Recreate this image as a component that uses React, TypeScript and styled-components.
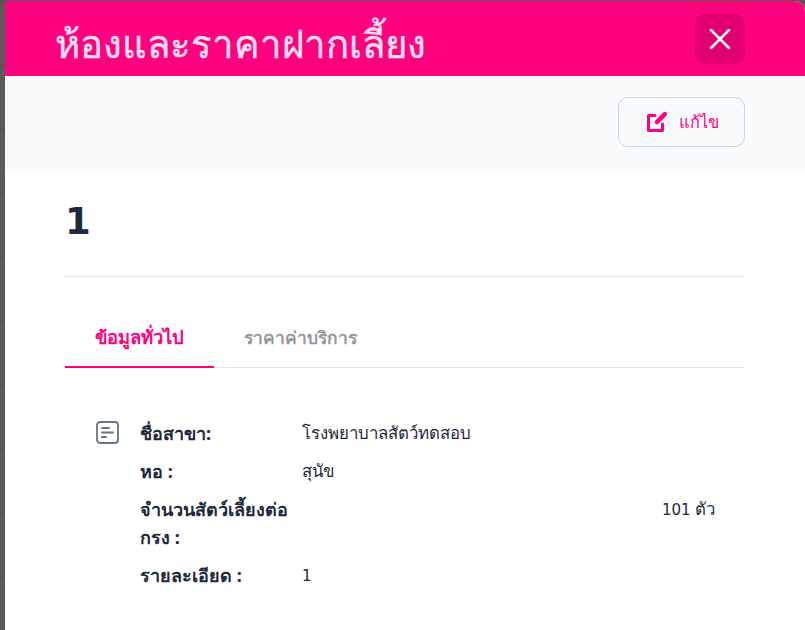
import React from "react";
import styled, { createGlobalStyle } from "styled-components";
import { X } from "lucide-react";

const GlobalStyle = createGlobalStyle`
  html, body {
    margin: 0;
    padding: 0;
    width: 805px;
    height: 630px;
    overflow: hidden;
    background: repeating-linear-gradient(
      to bottom,
      #5a5a5a 0,
      #5a5a5a 1px,
      #4e4e4e 1px,
      #4e4e4e 2px,
      #5a5a5a 2px,
      #5a5a5a 64px
    );
  }
  * { box-sizing: border-box; }
`;

const Screen = styled.div`
  width: 805px;
  height: 630px;
  padding: 1px 0 0 5px;
  overflow: hidden;
  font-family: "Noto Sans", sans-serif;
`;

const Panel = styled.div`
  height: 629px;
  background: #ffffff;
  border-top-right-radius: 10px;
  overflow: hidden;
`;

const Header = styled.header`
  display: flex;
  align-items: center;
  justify-content: space-between;
  height: 75px;
  padding: 0 60px 0 50px;
  background: #ff007f;
`;

const Title = styled.h1`
  margin: 12px 0 0;
  font-size: 38.300px;
  font-weight: 500;
  color: #ffdff0;
  -webkit-text-stroke: 0.4px #ffdff0;
`;

const CloseButton = styled.button`
  display: flex;
  align-items: center;
  justify-content: center;
  width: 50px;
  height: 50px;
  padding: 0;
  border: none;
  border-radius: 10px;
  background: #e0006f;
  color: #ffffff;
`;

const ActionBar = styled.div`
  display: flex;
  justify-content: flex-end;
  height: 96px;
  padding: 21px 60px 0 0;
  background: #f9fafc;
`;

const EditButton = styled.button`
  display: flex;
  align-items: center;
  gap: 11px;
  width: 127px;
  height: 50px;
  padding: 0 0 0 27px;
  border: 1px solid #cdd6e6;
  border-radius: 10px;
  background: transparent;
  font-family: "Noto Sans", sans-serif;
  font-size: 16.500px;
  font-weight: 500;
  color: #ff007f;
`;

const Body = styled.div`
  padding: 0 60px;
`;

const Heading = styled.div`
  height: 105px;
  padding-top: 27px;
  border-bottom: 1px solid #e4e6ec;
  font-family: "DejaVu Sans", sans-serif;
  font-size: 37px;
  font-weight: 700;
  line-height: 45px;
  color: #1e293b;
`;

const Tabs = styled.div`
  display: flex;
  height: 91px;
  padding-top: 40px;
  border-bottom: 1px solid #e4e6ec;
`;

const Tab = styled.div<{ $active?: boolean }>`
  height: 51px;
  padding: 0 30px;
  border-bottom: 2px solid ${(p) => (p.$active ? "#ff007f" : "transparent")};
  font-size: ${(p) => (p.$active ? "18.300px" : "17.400px")};
  font-weight: 700;
  line-height: 40px;
  color: ${(p) => (p.$active ? "#ff007f" : "#94979e")};
`;

const Info = styled.div`
  display: flex;
  gap: 20px;
  padding: 51px 30px 0;
`;

const IconBox = styled.svg`
  flex: none;
  width: 25px;
  height: 25px;
  margin-top: 1px;
  color: #64748b;
`;

const Rows = styled.div`
  flex: 1;
  display: flex;
  flex-direction: column;
  gap: 10px;
`;

const Row = styled.div`
  display: grid;
  grid-template-columns: 162px 1fr;
  line-height: 28px;
  color: #1e293b;
`;

const Label = styled.div`
  font-size: 18px;
  font-weight: 700;
`;

const Value = styled.div<{ $end?: boolean }>`
  font-size: 16.800px;
  text-align: ${(p) => (p.$end ? "right" : "left")};
`;

const Num = styled.span`
  font-family: "DejaVu Sans", sans-serif;
  font-size: 15px;
`;

export default function App() {
  return (
    <Screen>
      <GlobalStyle />
      <Panel>
        <Header>
          <Title>ห้องและราคาฝากเลี้ยง</Title>
          <CloseButton aria-label="close">
            <X size={36} strokeWidth={1.7} />
          </CloseButton>
        </Header>
        <ActionBar>
          <EditButton>
            <svg width="22" height="22" viewBox="0 0 22 22" fill="none" stroke="currentColor" strokeWidth="3" strokeLinecap="round" strokeLinejoin="round">
              <path d="M9 4.500H2.500v15h14V13" />
              <path d="M18.800 3.200 11 11" strokeWidth="4.500" />
            </svg>
            แก้ไข
          </EditButton>
        </ActionBar>
        <Body>
          <Heading>1</Heading>
          <Tabs>
            <Tab $active>ข้อมูลทั่วไป</Tab>
            <Tab>ราคาค่าบริการ</Tab>
          </Tabs>
          <Info>
            <IconBox viewBox="0 0 25 25" fill="none" stroke="currentColor" strokeWidth="1.8" strokeLinecap="round">
              <rect x="2" y="2" width="21" height="21" rx="3" />
              <path d="M7 8h7M7 12.500h11M7 17h4" />
            </IconBox>
            <Rows>
              <Row>
                <Label>ชื่อสาขา:</Label>
                <Value>โรงพยาบาลสัตว์ทดสอบ</Value>
              </Row>
              <Row>
                <Label>หอ :</Label>
                <Value>สุนัข</Value>
              </Row>
              <Row>
                <Label>จำนวนสัตว์เลี้ยงต่อกรง :</Label>
                <Value $end>
                  <Num>101</Num> ตัว
                </Value>
              </Row>
              <Row>
                <Label>รายละเอียด :</Label>
                <Value>
                  <Num>1</Num>
                </Value>
              </Row>
            </Rows>
          </Info>
        </Body>
      </Panel>
    </Screen>
  );
}
